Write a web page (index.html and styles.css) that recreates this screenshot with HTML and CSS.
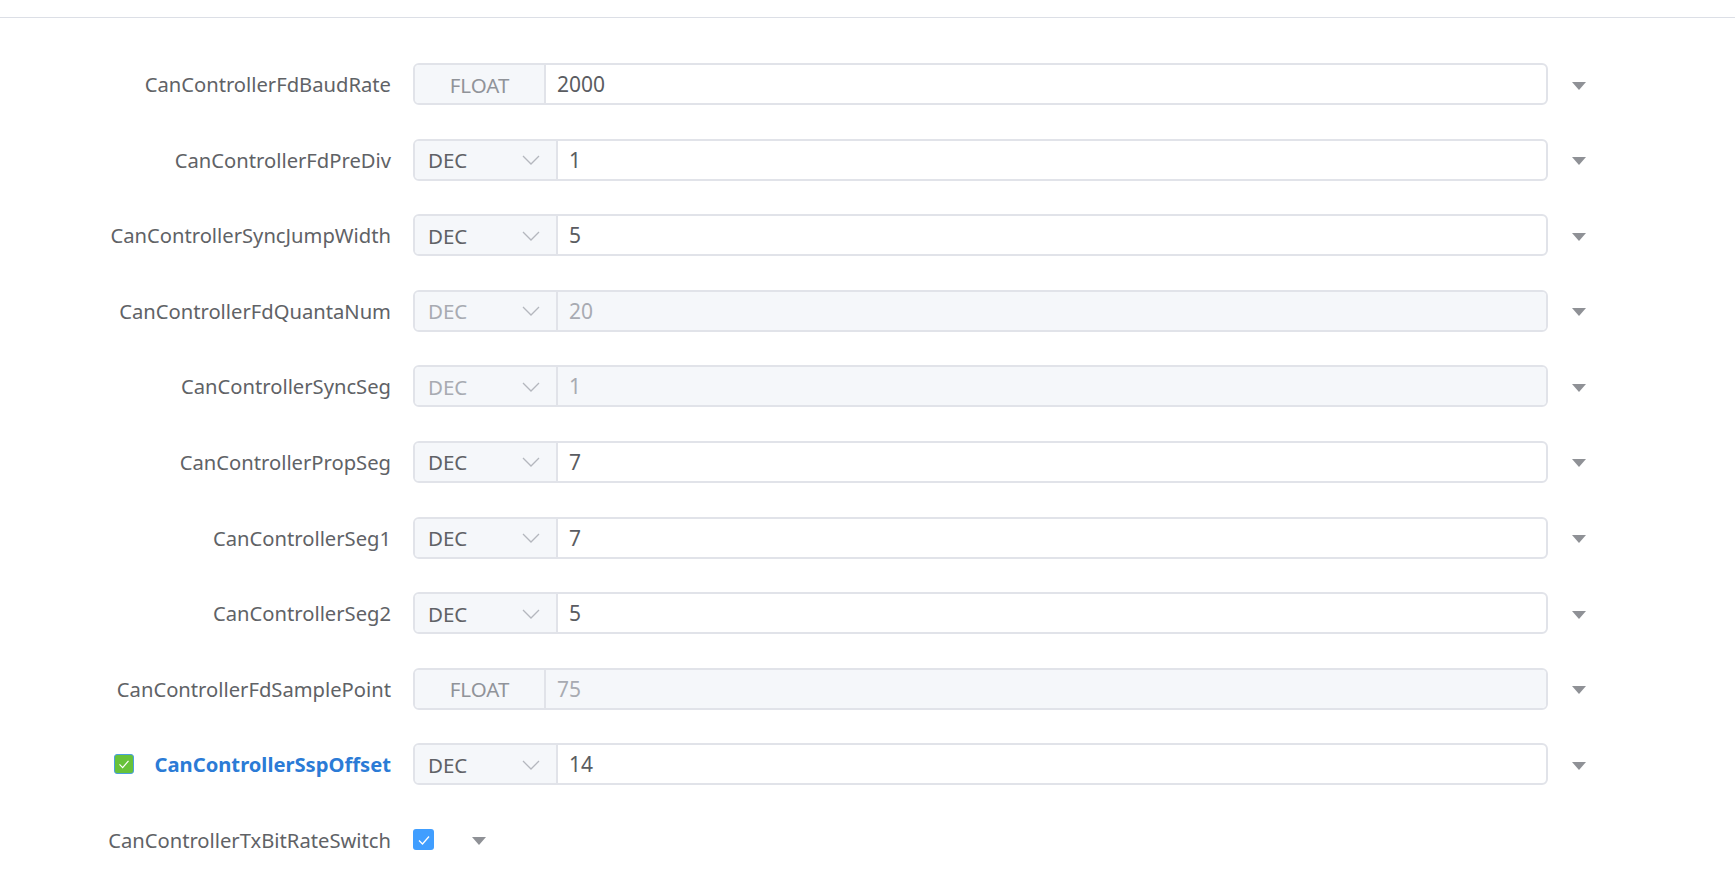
FILE: index.html
```html
<!DOCTYPE html>
<html lang="en">
<head>
    <meta charset="UTF-8">
    <meta name="viewport" content="width=device-width, initial-scale=1.0">
    <title>CanController</title>
    <link rel="stylesheet" href="styles.css">
</head>
<body>

    <div class="topbar"></div>

    <div class="form">
        <div class="row">
            <label class="label">CanControllerFdBaudRate</label>
            <div class="field">
                <span class="prefix">FLOAT</span>
                <span class="value">2000</span>
            </div>
            <span class="caret"></span>
        </div>

        <div class="row">
            <label class="label">CanControllerFdPreDiv</label>
            <div class="field">
                <span class="select">DEC<svg class="chev" viewBox="0 0 18 10"><polyline points="1,1 9,9 17,1"/></svg></span>
                <span class="value">1</span>
            </div>
            <span class="caret"></span>
        </div>

        <div class="row">
            <label class="label">CanControllerSyncJumpWidth</label>
            <div class="field">
                <span class="select">DEC<svg class="chev" viewBox="0 0 18 10"><polyline points="1,1 9,9 17,1"/></svg></span>
                <span class="value">5</span>
            </div>
            <span class="caret"></span>
        </div>

        <div class="row">
            <label class="label">CanControllerFdQuantaNum</label>
            <div class="field disabled">
                <span class="select">DEC<svg class="chev" viewBox="0 0 18 10"><polyline points="1,1 9,9 17,1"/></svg></span>
                <span class="value">20</span>
            </div>
            <span class="caret"></span>
        </div>

        <div class="row">
            <label class="label">CanControllerSyncSeg</label>
            <div class="field disabled">
                <span class="select">DEC<svg class="chev" viewBox="0 0 18 10"><polyline points="1,1 9,9 17,1"/></svg></span>
                <span class="value">1</span>
            </div>
            <span class="caret"></span>
        </div>

        <div class="row">
            <label class="label">CanControllerPropSeg</label>
            <div class="field">
                <span class="select">DEC<svg class="chev" viewBox="0 0 18 10"><polyline points="1,1 9,9 17,1"/></svg></span>
                <span class="value">7</span>
            </div>
            <span class="caret"></span>
        </div>

        <div class="row">
            <label class="label">CanControllerSeg1</label>
            <div class="field">
                <span class="select">DEC<svg class="chev" viewBox="0 0 18 10"><polyline points="1,1 9,9 17,1"/></svg></span>
                <span class="value">7</span>
            </div>
            <span class="caret"></span>
        </div>

        <div class="row">
            <label class="label">CanControllerSeg2</label>
            <div class="field">
                <span class="select">DEC<svg class="chev" viewBox="0 0 18 10"><polyline points="1,1 9,9 17,1"/></svg></span>
                <span class="value">5</span>
            </div>
            <span class="caret"></span>
        </div>

        <div class="row">
            <label class="label">CanControllerFdSamplePoint</label>
            <div class="field disabled">
                <span class="prefix">FLOAT</span>
                <span class="value">75</span>
            </div>
            <span class="caret"></span>
        </div>

        <div class="row">
            <label class="label active">
                <span class="check green"><svg viewBox="0 0 20 20"><polyline points="5,10.5 8.5,14 15,6.5"/></svg></span>
                <span class="active-text">CanControllerSspOffset</span>
            </label>
            <div class="field">
                <span class="select">DEC<svg class="chev" viewBox="0 0 18 10"><polyline points="1,1 9,9 17,1"/></svg></span>
                <span class="value">14</span>
            </div>
            <span class="caret"></span>
        </div>

        <div class="row short">
            <label class="label">CanControllerTxBitRateSwitch</label>
            <div class="switch-cell">
                <span class="check blue"><svg viewBox="0 0 20 20"><polyline points="5,10.5 8.5,14 15,6.5"/></svg></span>
                <span class="caret"></span>
            </div>
        </div>
    </div>

</body>
</html>
```

FILE: styles.css
```css
* {
    margin: 0;
    padding: 0;
    box-sizing: border-box;
}
body {
    font-family: "Noto Sans", "Open Sans", Arial, sans-serif;
    background-color: #fff;
    color: #606266;
    width: 1735px;
    height: 893px;
    overflow: hidden;
}
.topbar {
    height: 18px;
    border-bottom: 1px solid #dcdfe6;
}
.form {
    padding-top: 45px;
}
.row {
    display: flex;
    align-items: center;
    height: 42px;
    margin-bottom: 33.6px;
}
.label {
    width: 391px;
    text-align: right;
    font-size: 20.2px;
    color: #606266;
    white-space: nowrap;
    display: flex;
    justify-content: flex-end;
    align-items: center;
}
.label.active {
    justify-content: space-between;
    padding-left: 114px;
}
.active-text {
    color: #2b7bd6;
    font-weight: bold;
}
.field {
    margin-left: 22px;
    width: 1135px;
    height: 42px;
    display: flex;
    border: 2px solid #e1e3e9;
    border-radius: 6px;
    overflow: hidden;
    font-size: 20.5px;
}
.prefix {
    width: 131px;
    background-color: #f5f7fa;
    border-right: 2px solid #e1e3e9;
    color: #909399;
    display: flex;
    align-items: center;
    justify-content: center;
    padding-top: 1px;
}
.select {
    width: 143px;
    background-color: #f5f7fa;
    border-right: 2px solid #e1e3e9;
    color: #606266;
    display: flex;
    align-items: center;
    justify-content: space-between;
    padding: 1px 16px 0 13px;
}
.chev {
    width: 18px;
    height: 10px;
    fill: none;
    stroke: #b4b7be;
    stroke-width: 1.3;
}
.value {
    flex: 1;
    display: flex;
    align-items: center;
    padding-left: 11px;
    color: #5a5c61;
    font-size: 21px;
}
.disabled .value {
    background-color: #f5f7fa;
    color: #a8abb2;
}
.disabled .select {
    color: #a8abb2;
}
.caret {
    margin-left: 24px;
    width: 0;
    height: 0;
    border-left: 7px solid transparent;
    border-right: 7px solid transparent;
    border-top: 8px solid #8f9196;
    margin-top: 3px;
}
.switch-cell {
    margin-left: 22px;
    display: flex;
    align-items: center;
}
.switch-cell .caret {
    margin-left: 38px;
}
.check {
    width: 21px;
    height: 21px;
    border-radius: 3px;
    display: flex;
    align-items: center;
    justify-content: center;
}
.check svg {
    width: 20px;
    height: 20px;
    fill: none;
    stroke: #fff;
    stroke-width: 1.3;
}
.check.green {
    background-color: #67c23a;
    border: 1px solid #4a9fe0;
    width: 20px;
    height: 20px;
}
.check.blue {
    background-color: #409eff;
}
```
